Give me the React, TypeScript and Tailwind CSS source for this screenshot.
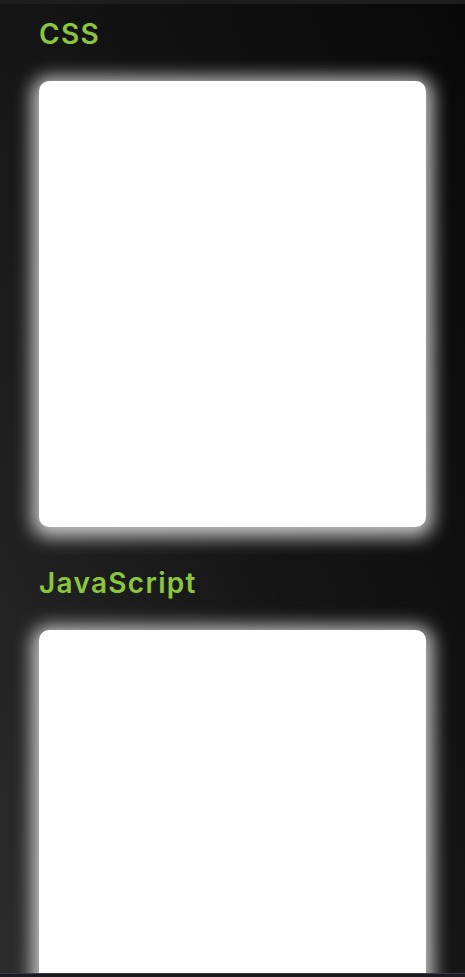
export default function App() {
  const sections = ["CSS", "JavaScript"];

  return (
    <div className="relative h-screen overflow-hidden bg-gradient-to-tr from-[#2c2c2c] via-[#151515] to-[#080808]">
      <div className="h-[4px] bg-[#1d1d1d]" />
      <div className="px-[39px] pt-[12px] flex flex-col">
        {sections.map((title) => (
          <section key={title} className="mb-[38px]">
            <h2 className="font-['Inter',sans-serif] text-[28px] leading-[36px] font-semibold text-[#8cc63f] tracking-[1.3px]">
              {title}
            </h2>
            <div className="mt-[29px] h-[446px] rounded-[10px] bg-white shadow-[0_3px_18px_7px_rgba(255,255,255,0.75)]" />
          </section>
        ))}
      </div>
      <div className="absolute bottom-0 left-0 right-0 h-[4px] bg-[#1b1b20] border-t border-[#3a3a3a]" />
    </div>
  );
}
